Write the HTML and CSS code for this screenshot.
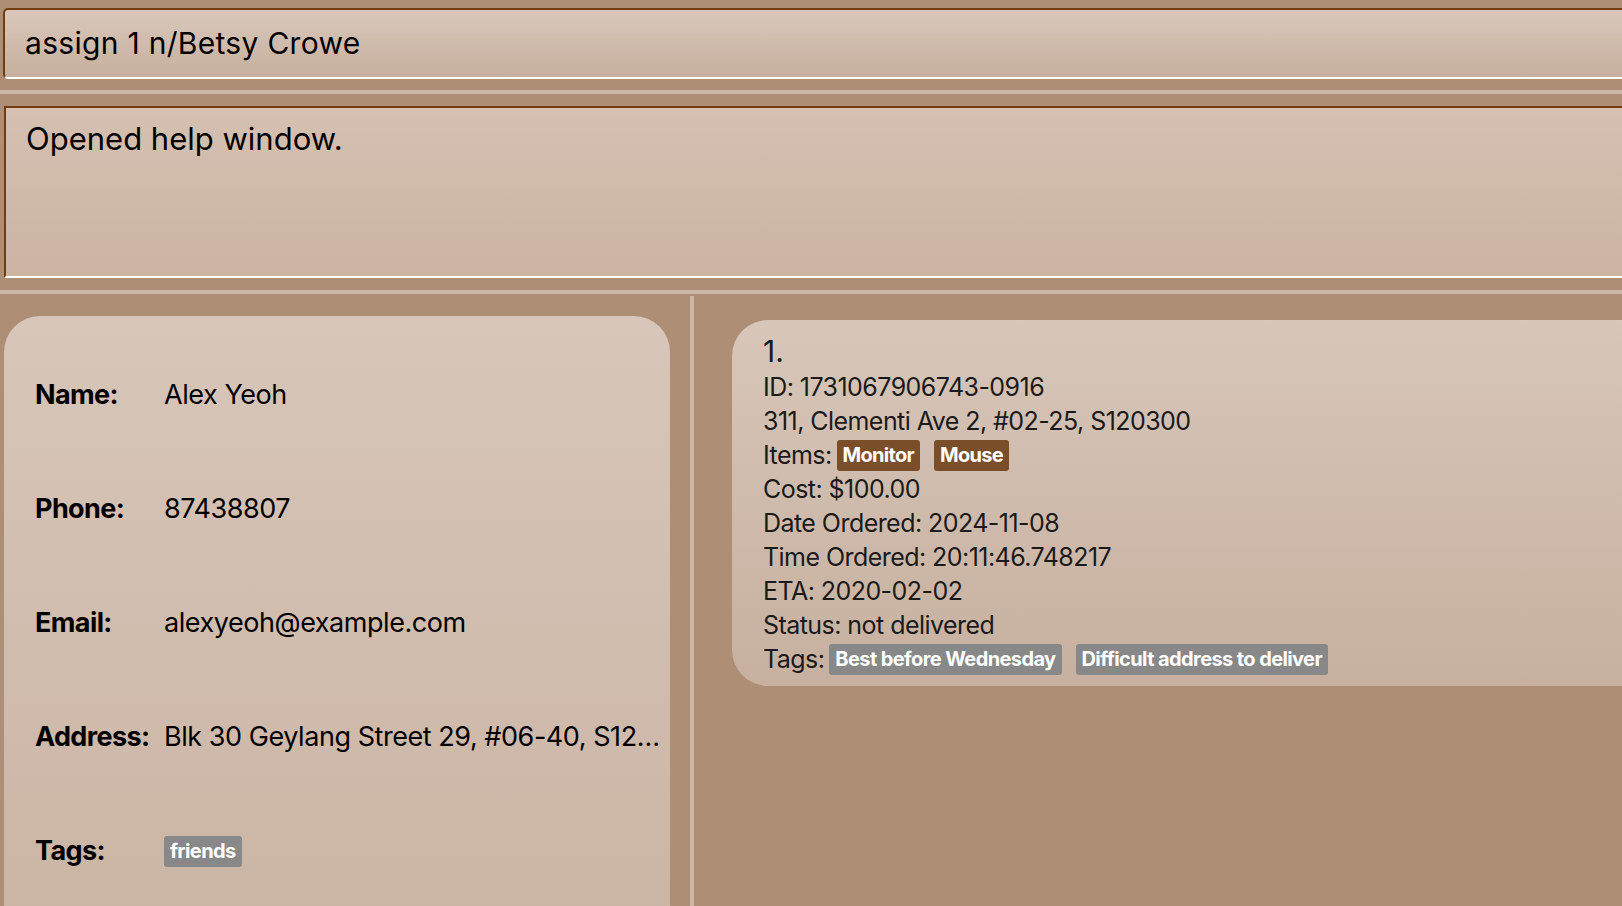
FILE: index.html
```html
<!DOCTYPE html>
<html>
<head>
<meta charset="utf-8">
<link rel="stylesheet" href="styles.css">
</head>
<body>
<div class="app">
  <div class="command-pane">
    <div class="command-box">assign 1 n/Betsy Crowe</div>
  </div>
  <div class="strip"></div>
  <div class="result-pane">
    <div class="result-box">Opened help window.</div>
  </div>
  <div class="strip"></div>
  <div class="main">
    <div class="left-pane">
      <div class="person-card">
        <div class="row"><span class="label">Name:</span><span class="value">Alex Yeoh</span></div>
        <div class="row"><span class="label">Phone:</span><span class="value">87438807</span></div>
        <div class="row"><span class="label">Email:</span><span class="value">alexyeoh@example.com</span></div>
        <div class="row"><span class="label">Address:</span><span class="value">Blk 30 Geylang Street 29, #06-40, S120300</span></div>
        <div class="row"><span class="label">Tags:</span><span class="value"><span class="chip tag">friends</span></span></div>
      </div>
    </div>
    <div class="divider"></div>
    <div class="right-pane">
      <div class="order-card">
        <div class="index">1.</div>
        <div class="line">ID: 1731067906743-0916</div>
        <div class="line">311, Clementi Ave 2, #02-25, S120300</div>
        <div class="line chips-line"><span>Items:</span><span class="chip item">Monitor</span><span class="chip item">Mouse</span></div>
        <div class="line">Cost: $100.00</div>
        <div class="line">Date Ordered: 2024-11-08</div>
        <div class="line">Time Ordered: 20:11:46.748217</div>
        <div class="line">ETA: 2020-02-02</div>
        <div class="line">Status: not delivered</div>
        <div class="line chips-line"><span>Tags:</span><span class="chip tag">Best before Wednesday</span><span class="chip tag">Difficult address to deliver</span></div>
      </div>
    </div>
  </div>
</div>
</body>
</html>
```
FILE: styles.css
```css
html, body {
  margin: 0;
  padding: 0;
}
body {
  width: 1622px;
  height: 906px;
  overflow: hidden;
  background: #ae8e74;
  font-family: "Inter", "Noto Sans", sans-serif;
  color: #000;
}
.app {
  display: flex;
  flex-direction: column;
  width: 1622px;
  height: 906px;
  overflow: hidden;
}
.command-pane {
  padding: 8px 0 0 3px;
  height: 90px;
  box-sizing: border-box;
  flex: none;
}
.command-box {
  width: 1660px;
  height: 71px;
  box-sizing: border-box;
  border: 2px solid #723c0e;
  border-bottom: 2px solid #ffffff;
  border-radius: 5px 0 0 5px;
  background: linear-gradient(#d9c8bb, #c6af9e);
  font-size: 30px;
  padding-left: 20px;
  line-height: 66px;
  letter-spacing: 0.3px;
}
.strip {
  height: 4px;
  background: #ccb7a8;
  flex: none;
}
.result-pane {
  padding: 12px 0 0 4px;
  height: 196px;
  box-sizing: border-box;
  flex: none;
}
.result-box {
  width: 1660px;
  height: 172px;
  box-sizing: border-box;
  border-top: 2px solid #723c0e;
  border-left: 2px solid #723c0e;
  border-bottom: 2px solid #ffffff;
  background: linear-gradient(#d5c0b1, #ccb3a2);
  font-size: 31px;
  padding: 12px 0 0 20px;
  letter-spacing: 0;
}
.main {
  display: flex;
  flex: 1;
  min-height: 0;
}
.left-pane {
  width: 690px;
  flex: none;
  padding: 22px 0 0 4px;
  box-sizing: border-box;
}
.person-card {
  width: 666px;
  height: 700px;
  box-sizing: border-box;
  border-radius: 36px 36px 0 0;
  background: linear-gradient(#d7c6b9, #c9b2a1);
  padding: 21px 3px 0 31px;
}
.row {
  display: grid;
  grid-template-columns: 129px minmax(0, 1fr);
  align-items: center;
  height: 114px;
  font-size: 27px;
}
.label {
  font-weight: 700;
  letter-spacing: -0.6px;
}
.value {
  white-space: nowrap;
  overflow: hidden;
  text-overflow: ellipsis;
  letter-spacing: -0.45px;
}
.divider {
  width: 4px;
  flex: none;
  margin-top: 2px;
  background: #ccb7a8;
}
.right-pane {
  flex: 1;
  padding: 26px 0 0 38px;
  overflow: hidden;
}
.order-card {
  width: 1000px;
  box-sizing: border-box;
  border-radius: 36px 0 0 36px;
  background: linear-gradient(#d7c6b9, #c7b09f);
  padding: 13px 0 10px 31px;
  color: #1a1a1a;
}
.index {
  font-size: 30px;
  line-height: 37px;
}
.line {
  font-size: 25px;
  line-height: 34px;
  height: 34px;
  letter-spacing: -0.55px;
  white-space: nowrap;
}
.chips-line {
  display: flex;
  align-items: center;
  gap: 5px;
}
.chip {
  display: inline-block;
  color: #fff;
  font-weight: 700;
  font-size: 20px;
  line-height: 31px;
  height: 31px;
  padding: 0 6px;
  border-radius: 3px;
  letter-spacing: -0.6px;
  vertical-align: middle;
}
.chips-line .chip + .chip {
  margin-left: 9px;
}
.chip.item {
  background: #7b4e2a;
  letter-spacing: -0.7px;
}
.chip.tag {
  background: #888888;
}
```
